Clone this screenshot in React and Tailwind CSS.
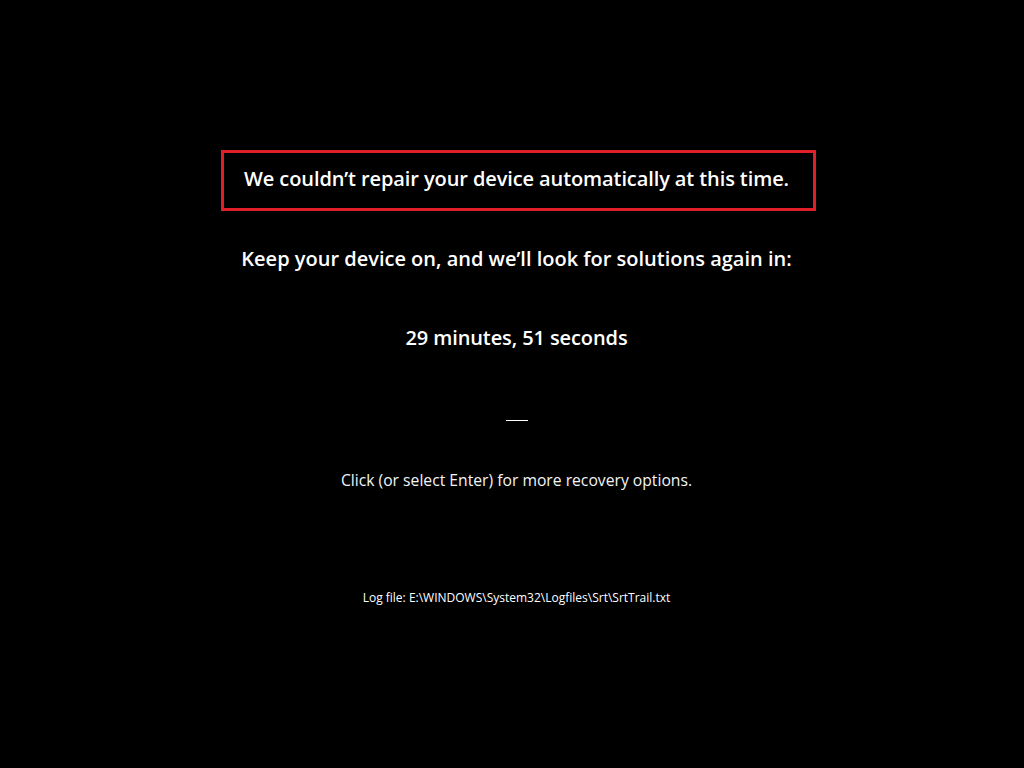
import React from "react";

const App = () => {
  return (
    <div
      className="w-[1024px] h-[768px] bg-black text-white flex flex-col items-center overflow-hidden pl-[9px]"
      style={{ fontFamily: '"Open Sans", "Noto Sans", sans-serif' }}
    >
      <div className="mt-[150px] ml-[3px] w-[595px] h-[61px] border-[3px] border-[#e01f2b] flex items-center justify-center">
        <p className="text-[20px] font-semibold tracking-[-0.1px] leading-[28px] -ml-[3px] -mt-[3px]">
          We couldn’t repair your device automatically at this time.
        </p>
      </div>

      <p className="mt-[34px] text-[20px] font-semibold tracking-[0px] leading-[28px]">
        Keep your device on, and we’ll look for solutions again in:
      </p>

      <p className="mt-[51px] text-[20px] font-semibold tracking-[-0.1px] leading-[28px]">
        29 minutes, 51 seconds
      </p>

      <div className="mt-[68px] w-[22px] h-px bg-white"></div>

      <p className="mt-[47px] text-[15.7px] tracking-[0px] leading-[24px] text-gray-100">
        Click (or select Enter) for more recovery options.
      </p>

      <p className="mt-[97px] text-[12px] tracking-[0px] leading-[18px]">
        Log file: E:\WINDOWS\System32\Logfiles\Srt\SrtTrail.txt
      </p>
    </div>
  );
};

export default App;
